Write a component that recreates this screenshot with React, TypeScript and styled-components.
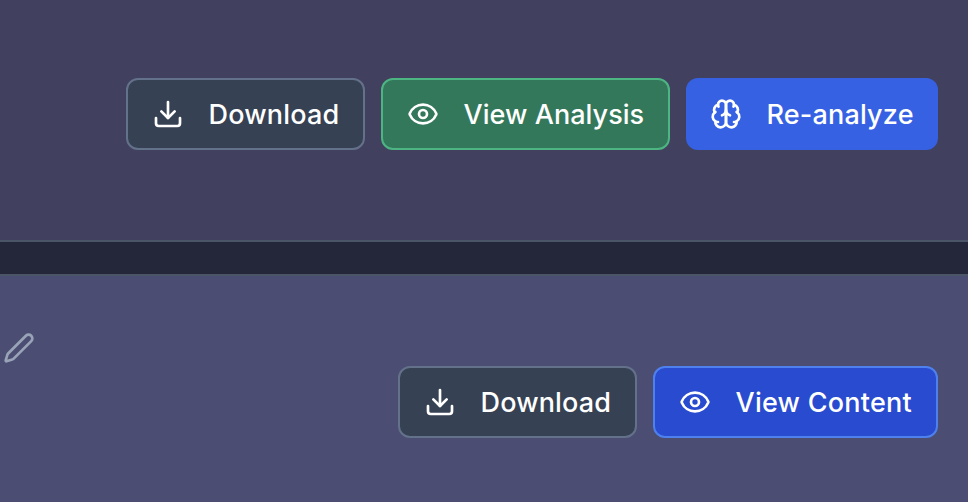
import React from 'react';
import styled, { createGlobalStyle } from 'styled-components';
import { Download, Eye } from 'lucide-react';

const Global = createGlobalStyle`
  *{box-sizing:border-box}
  body{margin:0;background:#24263a;font-family:Inter,sans-serif;overflow:hidden}
`;
const Page = styled.div`height:502px;display:flex;flex-direction:column;gap:32px;`;
const Panel = styled.section<{ $lower?: boolean }>`
  display:flex;align-items:flex-start;justify-content:flex-end;gap:16px;
  padding:${p => (p.$lower ? '90px 30px 0 3px' : '78px 30px 0')};
  height:${p => (p.$lower ? '228px' : '242px')};
  background:${p => (p.$lower ? '#4b4e72' : '#41415f')};
  border:solid #4a5568;
  border-width:${p => (p.$lower ? '2px 0 0' : '0 0 2px')};
`;
const Button = styled.button<{ $w: number; $bg: string; $line: string; $start?: number }>`
  width:${p => p.$w}px;height:72px;flex:none;display:flex;align-items:center;gap:24.5px;
  padding:0 0 0 ${p => p.$start ?? 24}px;border:2px solid ${p => p.$line};border-radius:12px;
  background:${p => p.$bg};color:#fff;white-space:nowrap;
  svg{flex:none}
`;
const Label = styled.span<{ $spacing: number }>`
  padding-top:2px;font:500 27px/40px Inter,sans-serif;letter-spacing:${p => p.$spacing}px;
`;
const Edit = styled.span`margin:-34px auto 0 0;display:flex;color:#98a3b8;`;
const Stroke = styled.svg`
  width:32px;height:32px;fill:none;stroke:currentColor;stroke-width:2;
  stroke-linecap:round;stroke-linejoin:round;
`;

const BrainIcon = () => (
  <Stroke viewBox="0 0 24 24">
    <path d="M12 5a3 3 0 1 0-5.997.125 4 4 0 0 0-2.526 5.77 4 4 0 0 0 .556 6.588A4 4 0 1 0 12 18Z" />
    <path d="M12 5a3 3 0 1 1 5.997.125 4 4 0 0 1 2.526 5.77 4 4 0 0 1-.556 6.588A4 4 0 1 1 12 18Z" />
    <path d="M15 13a4.5 4.5 0 0 1-3-4 4.5 4.5 0 0 1-3 4M17.599 6.5a3 3 0 0 0 .399-1.375M6.003 5.125A3 3 0 0 0 6.401 6.5M3.477 10.896a4 4 0 0 1 .585-.396M19.938 10.5a4 4 0 0 1 .585.396M6 18a4 4 0 0 1-1.967-.516M19.967 17.484A4 4 0 0 1 18 18" />
  </Stroke>
);
const PencilIcon = () => (
  <Stroke viewBox="0 0 24 24"><path d="M21.174 6.812a1 1 0 0 0-3.986-3.987L3.842 16.174a2 2 0 0 0-.5.83l-1.321 4.352a.5.5 0 0 0 .623.622l4.353-1.32a2 2 0 0 0 .83-.497z" /></Stroke>
);

export default function App() {
  return <><Global /><Page>
    <Panel>
      <Button $w={239} $bg="#364153" $line="#64718a"><Download size={32} /><Label $spacing={.18}>Download</Label></Button>
      <Button $w={289} $bg="#34785b" $line="#4cb582"><Eye size={32} /><Label $spacing={.05}>View Analysis</Label></Button>
      <Button $w={252} $bg="#3661e3" $line="#3661e3" $start={22}><BrainIcon /><Label $spacing={.18}>Re-analyze</Label></Button>
    </Panel>
    <Panel $lower>
      <Edit><PencilIcon /></Edit>
      <Button $w={239} $bg="#364153" $line="#64718a"><Download size={32} /><Label $spacing={.15}>Download</Label></Button>
      <Button $w={285} $bg="#284bd0" $line="#4e80ee"><Eye size={32} /><Label $spacing={.25}>View Content</Label></Button>
    </Panel>
  </Page></>;
}
